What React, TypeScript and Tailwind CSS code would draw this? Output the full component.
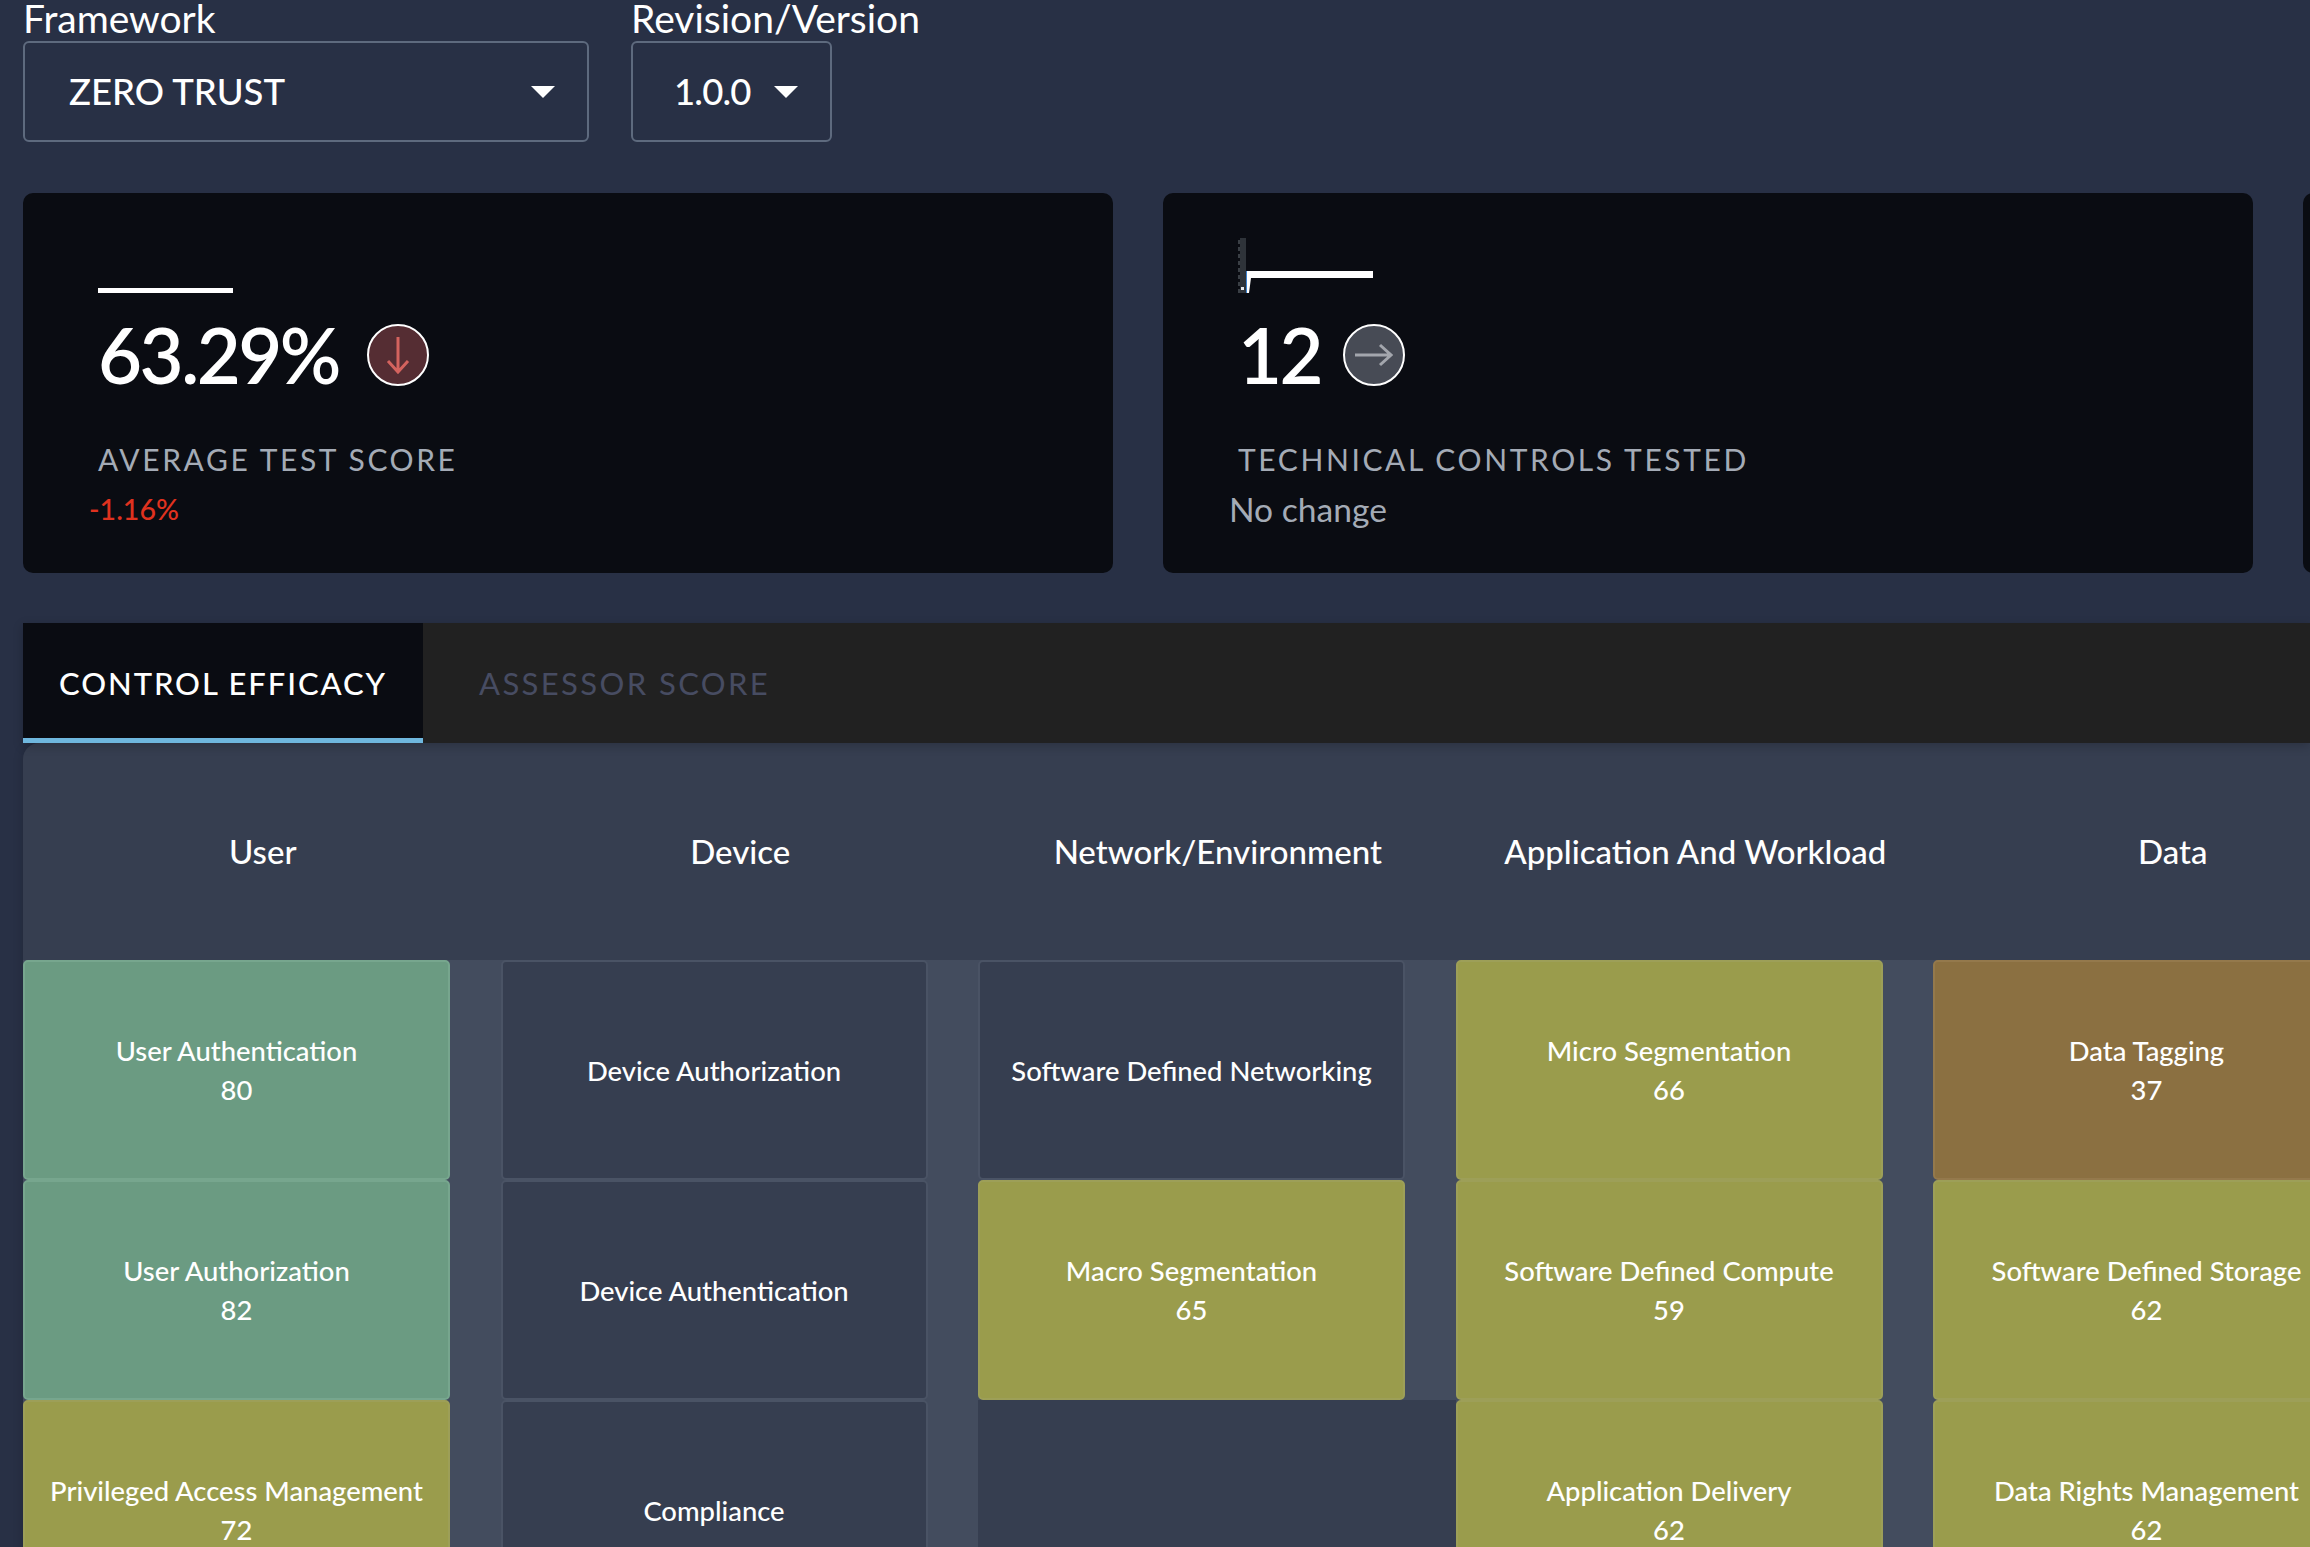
const font = { fontFamily: '"Lato", "Noto Sans", sans-serif' };

type Cell = { name: string; score?: number; tone?: "green" | "olive" | "brown" };

const columns: { title: string; cells: (Cell | null)[] }[] = [
  {
    title: "User",
    cells: [
      { name: "User Authentication", score: 80, tone: "green" },
      { name: "User Authorization", score: 82, tone: "green" },
      { name: "Privileged Access Management", score: 72, tone: "olive" },
    ],
  },
  {
    title: "Device",
    cells: [{ name: "Device Authorization" }, { name: "Device Authentication" }, { name: "Compliance" }],
  },
  {
    title: "Network/Environment",
    cells: [{ name: "Software Defined Networking" }, { name: "Macro Segmentation", score: 65, tone: "olive" }, null],
  },
  {
    title: "Application And Workload",
    cells: [
      { name: "Micro Segmentation", score: 66, tone: "olive" },
      { name: "Software Defined Compute", score: 59, tone: "olive" },
      { name: "Application Delivery", score: 62, tone: "olive" },
    ],
  },
  {
    title: "Data",
    cells: [
      { name: "Data Tagging", score: 37, tone: "brown" },
      { name: "Software Defined Storage", score: 62, tone: "olive" },
      { name: "Data Rights Management", score: 62, tone: "olive" },
    ],
  },
];

const toneClass = {
  green: "bg-[#6b9b82] border-[#77a68e]",
  olive: "bg-[#9a9c4c] border-[#9d9f58]",
  brown: "bg-[#8b7041] border-[#94794c]",
  none: "bg-[#363e50] border-[#4a5365]",
};

function Select({ label, value, width, pad }: { label: string; value: string; width: string; pad: string }) {
  return (
    <div className={width}>
      <div className="h-[41px] text-[39px] leading-[36px] text-white">{label}</div>
      <div
        className={`flex h-[101px] items-center justify-between rounded-[6px] border-2 border-[#5e6a7e] pr-[32px] text-[36.5px] font-medium text-white ${pad}`}
      >
        <span>{value}</span>
        <span className="h-0 w-0 border-x-[12px] border-t-[12px] border-x-transparent border-t-white" />
      </div>
    </div>
  );
}

// clipped sparkline: the chart in the real page has collapsed to a line
function Spark() {
  return (
    <svg width="135" height="55" viewBox="0 0 135 55" className="ml-[23px]">
      <rect x="2" y="0" width="6" height="55" fill="#2e3339" />
      {[2, 9, 16, 23, 30, 37, 44, 51].map((y) => (
        <rect key={y} x="0" y={y} width="2" height="4" fill="#3a3f45" />
      ))}
      <rect x="8" y="33" width="1" height="22" fill="#3b82d0" />
      <path d="M9 33H135V40H13L11 55H9Z" fill="#fff" />
      <rect x="3" y="49" width="3" height="3" fill="#e5e7eb" />
    </svg>
  );
}

function StatCard({
  value,
  label,
  delta,
  deltaClass,
  badgeGap,
  down,
}: {
  value: string;
  label: string;
  delta: string;
  deltaClass: string;
  badgeGap: string;
  down?: boolean;
}) {
  return (
    <div className="h-[380px] w-[1090px] shrink-0 rounded-[10px] bg-[#0a0c12] pt-[45px] pl-[52px]">
      <div className="flex h-[55px] items-end">
        {down ? <div className="ml-[23px] h-[5px] w-[135px] bg-white" /> : <Spark />}
      </div>
      <div className="mt-[16px] flex items-center">
        <span className="ml-[23px] text-[76px] leading-[92px] font-semibold tracking-[-2.5px] text-white">{value}</span>
        <span
          className={`flex h-[62px] w-[62px] items-center justify-center rounded-full border-2 border-white ${badgeGap} ${
            down ? "bg-[#552d33]" : "bg-[#474b55]"
          }`}
        >
          {down ? (
            <svg width="24" height="38" viewBox="0 0 24 38" fill="none" stroke="#d4635e" strokeWidth="3">
              <path d="M12 1V36M2 25L12 36L22 25" />
            </svg>
          ) : (
            <svg width="38" height="24" viewBox="0 0 38 24" fill="none" stroke="#a3a6ad" strokeWidth="3">
              <path d="M0 12H36M25 2L36 12L25 22" />
            </svg>
          )}
        </span>
      </div>
      <div className="mt-[38px] ml-[23px] text-[30px] leading-[40px] tracking-[2.6px] text-[#a4abb6]">{label}</div>
      <div className={`mt-[9px] ml-[14px] leading-[42px] ${deltaClass}`}>{delta}</div>
    </div>
  );
}

export default function App() {
  return (
    <div style={font} className="h-[1547px] w-[2310px] overflow-hidden bg-[#283045]">
      <div className="flex gap-[42px] pl-[23px]">
        <Select label="Framework" value="ZERO TRUST" width="w-[566px]" pad="pl-[44px]" />
        <Select label="Revision/Version" value="1.0.0" width="w-[201px]" pad="pl-[41px] tracking-[-0.8px]" />
      </div>

      <div className="mt-[51px] flex gap-[50px] pl-[23px]">
        <StatCard
          value="63.29%"
          label="AVERAGE TEST SCORE"
          delta="-1.16%"
          deltaClass="-ml-px text-[28.5px] font-medium text-[#e0321f]"
          badgeGap="ml-[28px]"
          down
        />
        <StatCard
          value="12"
          label="TECHNICAL CONTROLS TESTED"
          delta="No change"
          deltaClass="text-[33.6px] text-[#a4abb6]"
          badgeGap="ml-[22px]"
        />
        <div className="h-[380px] w-[1090px] shrink-0 rounded-[10px] bg-[#0a0c12]" />
      </div>

      <div className="relative z-10 mt-[50px] ml-[23px] flex h-[120px] bg-[#212121] text-[31px] tracking-[2.4px] shadow-[0_3px_10px_rgba(0,0,0,0.2)]">
        <div className="flex w-[400px] items-center justify-center border-b-[5px] border-[#6fb7de] bg-[#0a0c12] pt-[5px] font-medium tracking-[1.9px] text-white">
          CONTROL EFFICACY
        </div>
        <div className="flex items-center pl-[56px] text-[#474c62]">ASSESSOR SCORE</div>
      </div>

      <div className="ml-[23px] rounded-tl-[16px] bg-[#363e50] shadow-[-2px_0_8px_rgba(0,0,0,0.12)]">
        <div className="flex">
          {columns.map((col) => (
            <div key={col.title} className="w-[477.5px] shrink-0">
              <div className="flex h-[217px] items-center justify-center pl-[2px] text-[33px] font-medium text-white">
                {col.title}
              </div>
              {col.cells.map((cell, i) => (
                <div key={i} className={cell ? "h-[220px] bg-[#434c5e] pr-[50.5px]" : "h-[220px]"}>
                  {cell && (
                    <div
                      className={`flex h-full flex-col items-center justify-center rounded-[5px] border-2 text-center text-[27.4px] leading-[39px] font-medium text-white ${
                        toneClass[cell.tone ?? "none"]
                      }`}
                    >
                      <span>{cell.name}</span>
                      {cell.score !== undefined && <span>{cell.score}</span>}
                    </div>
                  )}
                </div>
              ))}
            </div>
          ))}
        </div>
      </div>
    </div>
  );
}
